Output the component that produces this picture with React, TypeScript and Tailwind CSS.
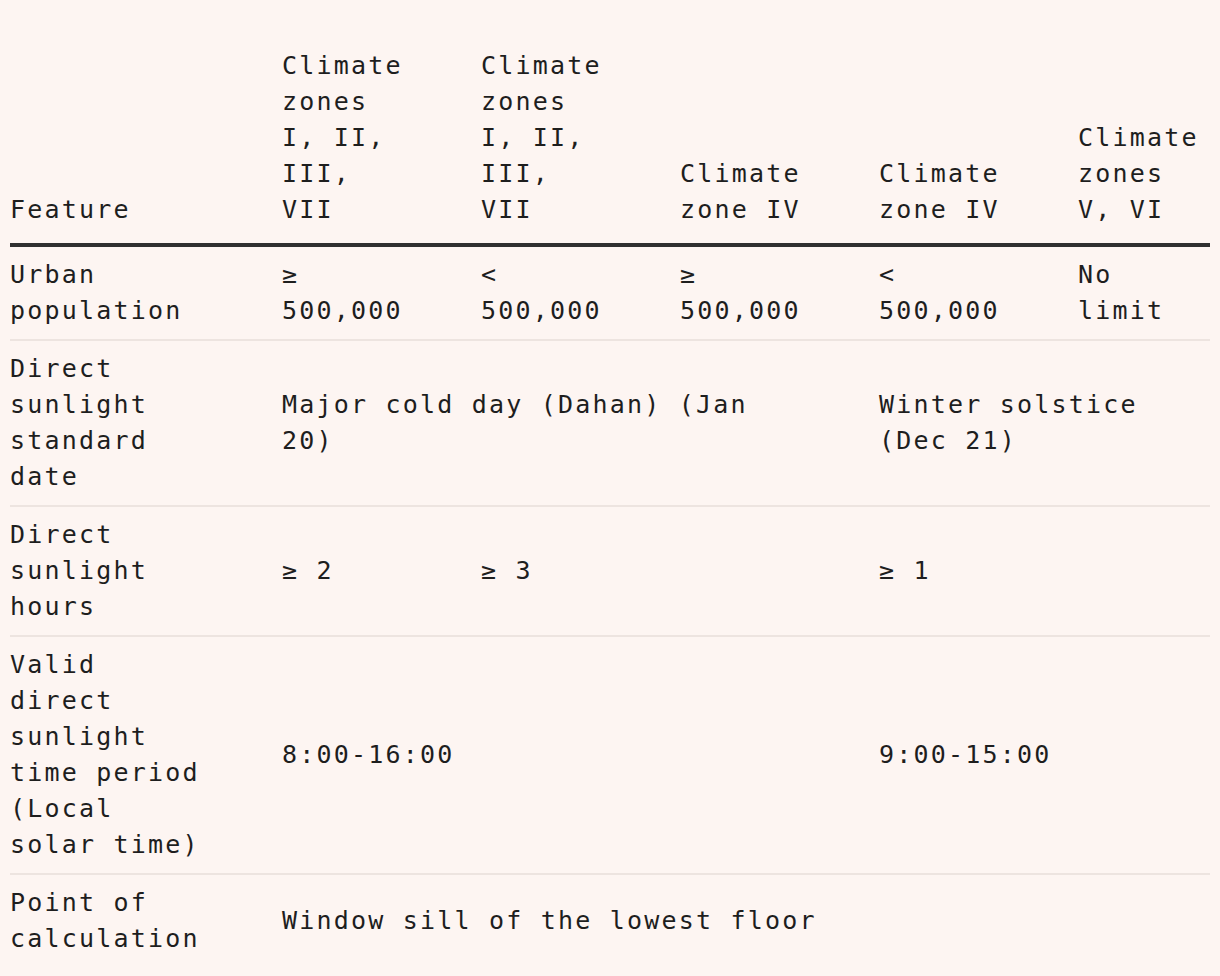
import React from "react";

const font = {
  fontFamily: '"DejaVu Sans Mono", "Liberation Mono", monospace',
};

export default function App() {
  const td =
    "align-middle text-left pl-0 pr-[70px] last:pr-0 py-[10px] border-b-2 border-[#ede4e0] font-normal";
  const tdLast = "align-middle text-left pl-0 pr-[70px] last:pr-0 py-[10px] font-normal";
  const th =
    "align-bottom text-left pl-0 pr-[70px] last:pr-0 pt-[10px] pb-[15px] border-b-4 border-[#303030] font-normal";
  return (
    <div
      className="min-h-[976px] w-full bg-[#fdf5f2] px-[10px] pt-[38px] text-[#1e1e1e] text-[25px] leading-[36px] tracking-[2.2px]"
      style={font}
    >
      <table className="w-[1200px] table-fixed border-separate border-spacing-0">
        <colgroup>
          <col className="w-[272px]" />
          <col className="w-[199px]" />
          <col className="w-[199px]" />
          <col className="w-[199px]" />
          <col className="w-[199px]" />
          <col className="w-[132px]" />
        </colgroup>
        <thead>
          <tr>
            <th className={th}>Feature</th>
            <th className={th}>Climate zones I, II, III, VII</th>
            <th className={th}>Climate zones I, II, III, VII</th>
            <th className={th}>Climate zone IV</th>
            <th className={th}>Climate zone IV</th>
            <th className={th}>Climate zones V, VI</th>
          </tr>
        </thead>
        <tbody>
          <tr>
            <td className={td}>Urban population</td>
            <td className={td}>≥ 500,000</td>
            <td className={td}>&lt; 500,000</td>
            <td className={td}>≥ 500,000</td>
            <td className={td}>&lt; 500,000</td>
            <td className={td}>No limit</td>
          </tr>
          <tr>
            <td className={td}>Direct sunlight standard date</td>
            <td className={td} colSpan={3}>
              Major cold day (Dahan) (Jan 20)
            </td>
            <td className={td} colSpan={2}>
              Winter solstice (Dec 21)
            </td>
          </tr>
          <tr>
            <td className={td}>Direct sunlight hours</td>
            <td className={td}>≥ 2</td>
            <td className={td} colSpan={2}>
              ≥ 3
            </td>
            <td className={td} colSpan={2}>
              ≥ 1
            </td>
          </tr>
          <tr>
            <td className={td}>Valid direct sunlight time period (Local solar time)</td>
            <td className={td} colSpan={3}>
              8:00-16:00
            </td>
            <td className={td} colSpan={2}>
              9:00-15:00
            </td>
          </tr>
          <tr>
            <td className={tdLast}>Point of calculation</td>
            <td className={tdLast} colSpan={5}>
              Window sill of the lowest floor
            </td>
          </tr>
        </tbody>
      </table>
    </div>
  );
}
